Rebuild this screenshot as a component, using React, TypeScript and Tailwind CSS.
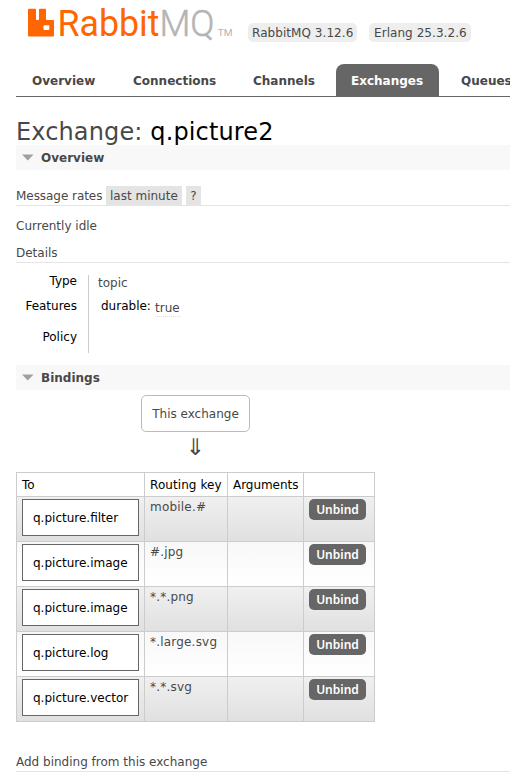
const bindings = [
  { to: "q.picture.filter", key: "mobile.#" },
  { to: "q.picture.image", key: "#.jpg" },
  { to: "q.picture.image", key: "*.*.png" },
  { to: "q.picture.log", key: "*.large.svg" },
  { to: "q.picture.vector", key: "*.*.svg" },
];

function Logo() {
  return (
    <svg width="210" height="44" viewBox="24 0 210 44" className="block shrink-0">
      <path
        fill="#ff6600"
        fillRule="evenodd"
        d="M29 8.700h6q1 0 1 1V19q0 1 1 1h1q1 0 1-1V9.700q0-1 1-1h5q1 0 1 1V19q0 1 1 1h6q1 0 1 1v14.500q0 1-1 1H29q-1 0-1-1V9.700q0-1 1-1zM44.500 25.200q-1 0-1 1v2.800q0 1 1 1h3.800q1 0 1-1v-2.800q0-1-1-1z"
      />
      <g fontFamily="Roboto, sans-serif">
        <text x="57.500" y="36.300" fontSize="37.500" fill="#ff6600" textLength="157" lengthAdjust="spacingAndGlyphs">
          Rabbit<tspan fontWeight="300" fill="#b4b4b4" stroke="#b4b4b4" strokeWidth=".5">MQ</tspan>
        </text>
        <text x="217.800" y="36.300" fontSize="9.500" fill="#b4b4b4" textLength="14.800" lengthAdjust="spacingAndGlyphs">TM</text>
      </g>
    </svg>
  );
}

function Section({ title }: { title: string }) {
  return (
    <h2 className="ml-4 flex h-[25px] items-center bg-[#f8f8f8] pl-1.5 text-[12px] font-bold">
      <svg width="12" height="7" viewBox="0 0 12 7" className="mr-[7px]">
        <path d="M0 .5h11.500L5.750 6.500z" fill="#a0a0a0" />
      </svg>
      {title}
    </h2>
  );
}

export default function App() {
  return (
    <div className="h-[774px] w-[510px] overflow-hidden bg-white font-['DejaVu_Sans',Verdana,sans-serif] text-[12px] leading-[16px] text-[#484848]">
      <header className="flex h-[64px] pl-6">
        <Logo />
        <span className="mt-[23px] ml-[14px] h-[19px] w-[109px] rounded-[5px] bg-[#eee] pl-1 leading-[20px] tracking-[0.06px] whitespace-nowrap">RabbitMQ 3.12.6</span>
        <span className="mt-[23px] ml-3 h-[19px] w-[102px] rounded-[5px] bg-[#eee] pl-[5px] leading-[20px] tracking-[0.06px] whitespace-nowrap">Erlang 25.3.2.6</span>
      </header>
      <nav className="ml-4 flex h-[33px] border-b border-[#666] font-bold leading-[34px] whitespace-nowrap">
        <span className="w-[101px] shrink-0 pl-4">Overview</span>
        <span className="w-[120px] shrink-0 pl-4">Connections</span>
        <span className="w-[99px] shrink-0 pl-4">Channels</span>
        <span className="h-[32px] w-[103px] shrink-0 rounded-t-[8px] bg-[#666] pl-[15px] text-white">Exchanges</span>
        <span className="shrink-0 pl-[22px]">Queues</span>
      </nav>
      <h1 className="ml-4 h-[48px] pt-[19px] text-[24px] leading-[32px] tracking-[0.13px] whitespace-nowrap">
        Exchange: <span className="text-black">q.picture2</span>
      </h1>
      <Section title="Overview" />
      <div className="ml-4 mt-4 flex h-[20px] border-b border-[#e4e4e4] leading-[20px] whitespace-nowrap">
        <span className="w-[90px] tracking-[-0.05px]">Message rates</span>
        <span className="w-[76px] bg-[#e4e4e4] pl-1">last minute</span>
        <span className="ml-1 w-[15px] bg-[#e4e4e4] text-center">?</span>
      </div>
      <p className="ml-4 mt-3 h-4">Currently idle</p>
      <h3 className="ml-4 mt-[11px] h-[18px] border-b border-[#e4e4e4]">Details</h3>
      <div className="ml-4 mt-3 flex h-[78px]">
        <div className="w-[73px] border-r border-[#ccc] pr-[11px] text-right text-black">
          <div className="mt-[-2px] h-[25px]">Type</div>
          <div className="h-[31px]">Features</div>
          <div>Policy</div>
        </div>
        <div className="pl-[9px]">
          <div className="h-[23px]">topic</div>
          <div className="flex pl-[3px]">
            <span className="w-[54px] text-black">durable:</span>
            <span className="mt-[2px] border-b border-dotted border-[#ddd]">true</span>
          </div>
        </div>
      </div>
      <div className="mt-3" />
      <Section title="Bindings" />
      <div className="ml-4 mt-[5px] w-[359px]">
        <div className="mx-auto flex h-[37px] w-[109px] items-center justify-center rounded-[5px] border border-[#bbb] whitespace-nowrap">This exchange</div>
        <div className="h-[40px] pt-[3px] text-center text-[23px] leading-[24px]">⇓</div>
      </div>
      <table className="ml-4 w-[359px] table-fixed border-collapse text-left whitespace-nowrap">
        <colgroup>
          <col className="w-[128px]" />
          <col className="w-[83px]" />
          <col className="w-[76px]" />
          <col className="w-[71px]" />
        </colgroup>
        <thead>
          <tr className="h-[24px] text-black">
            <th className="border border-[#ccc] p-0 pl-[5px] font-normal">To</th>
            <th className="border border-[#ccc] p-0 pl-[5px] font-normal tracking-[0.08px]">Routing key</th>
            <th className="border border-[#ccc] p-0 pl-[5px] font-normal tracking-[-0.05px]">Arguments</th>
            <th className="border border-[#ccc] p-0" />
          </tr>
        </thead>
        <tbody>
          {bindings.map((b) => (
            <tr key={b.to + b.key} className="h-[45px] align-top odd:bg-linear-to-b odd:from-[#f0f0f0] odd:to-[#e0e0e0] even:bg-linear-to-b even:from-[#f8f8f8] even:to-white">
              <td className="border border-[#ccc] p-0 pt-[2px] pl-[5px]">
                <div className="flex h-[37px] w-[117px] items-center border border-[#666] bg-white pl-[10px] text-black">{b.to}</div>
              </td>
              <td className="border border-[#ccc] p-0 pt-[2px] pl-[5px] tracking-[0.2px]">{b.key}</td>
              <td className="border border-[#ccc] p-0" />
              <td className="border border-[#ccc] p-0 pt-[2px] pl-[5px]">
                <button className="block h-[21px] w-[57px] rounded-[5px] bg-[#666] text-center font-['Noto_Sans','Open_Sans',sans-serif] text-[12px] font-semibold leading-[21px] text-white">Unbind</button>
              </td>
            </tr>
          ))}
        </tbody>
      </table>
      <h3 className="ml-4 mt-[32px] h-[18px] border-b border-[#e4e4e4]">Add binding from this exchange</h3>
    </div>
  );
}
